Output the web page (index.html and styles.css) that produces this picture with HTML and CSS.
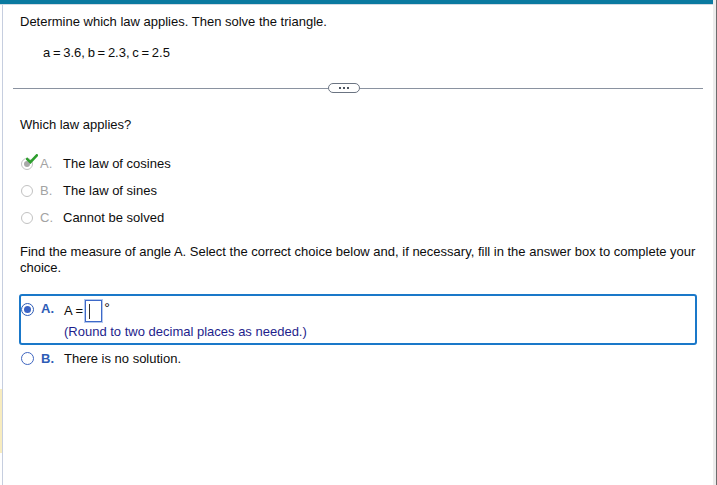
FILE: index.html
```html
<!DOCTYPE html>
<html>
<head>
<meta charset="utf-8">
<link rel="stylesheet" href="styles.css">
</head>
<body>
<div class="app">
  <div class="main">
    <div class="topbar"></div>
    <div class="body">
      <div class="leftrail"><div class="note"></div></div>
      <div class="content">
        <div class="prompt">Determine which law applies. Then solve the triangle.</div>
        <div class="given">a = 3.6, b = 2.3, c = 2.5</div>
        <div class="divider">
          <div class="line line-left"></div>
          <div class="pill"><span class="dot"></span><span class="dot"></span><span class="dot"></span></div>
          <div class="line line-right"></div>
        </div>
        <div class="question">Which law applies?</div>
        <div class="choices">
          <div class="choice">
            <span class="radio radio-done">
              <span class="radio-dot"></span>
              <svg class="check" viewBox="0 0 12 10" width="12" height="10"><path d="M1.2 5.2 L4.4 8.2 L10.8 1.4" fill="none" stroke="#2d9e2d" stroke-width="2.6" stroke-linecap="square"/></svg>
            </span>
            <span class="letter letter-muted">A.</span>
            <span class="label">The law of cosines</span>
          </div>
          <div class="choice">
            <span class="radio"></span>
            <span class="letter letter-muted">B.</span>
            <span class="label">The law of sines</span>
          </div>
          <div class="choice">
            <span class="radio"></span>
            <span class="letter letter-muted">C.</span>
            <span class="label">Cannot be solved</span>
          </div>
        </div>
        <div class="question2">Find the measure of angle A. Select the correct choice below and, if necessary, fill in the answer box to complete your choice.</div>
        <div class="answerbox">
          <span class="radio radio-on"><span class="radio-fill"></span></span>
          <span class="letter letter-active letter-boxed">A.</span>
          <div class="answer">
            <div class="eq">A =<span class="input"><span class="caret"></span></span><span class="deg">°</span></div>
            <div class="hint">(Round to two decimal places as needed.)</div>
          </div>
        </div>
        <div class="choice choice-b">
          <span class="radio radio-blue"></span>
          <span class="letter letter-active">B.</span>
          <span class="label">There is no solution.</span>
        </div>
      </div>
    </div>
  </div>
  <div class="rightrail"></div>
</div>
</body>
</html>
```
FILE: styles.css
```css
html, body {
  margin: 0;
  padding: 0;
  background: #ffffff;
}
body {
  font-family: "Liberation Sans", Arial, sans-serif;
  font-size: 13px;
  line-height: 16px;
  color: #0d0d0d;
}
.app {
  display: flex;
  width: 717px;
  height: 485px;
  overflow: hidden;
}
.main {
  width: 713px;
  display: flex;
  flex-direction: column;
}
.topbar {
  height: 4px;
  background: #0a7aa0;
  border-bottom: 1px solid #d2dae3;
}
.rightrail {
  width: 3px;
  background: #ececec;
  border-right: 1px solid #6d6d6d;
}
.body {
  display: flex;
  flex: 1;
}
.leftrail {
  width: 2px;
  border-right: 1px solid #c6cedf;
}
.note {
  margin-top: 384px;
  height: 64px;
  background: #f8ecbf;
}
.content {
  flex: 1;
  padding: 9px 10px 0 10px;
}
.prompt {
  padding-left: 7px;
}
.given {
  margin-top: 15px;
  padding-left: 30px;
  word-spacing: -0.9px;
}
.divider {
  margin-top: 22px;
  height: 10px;
  display: flex;
  align-items: center;
}
.line {
  height: 1px;
  background: #8a92a0;
}
.line-left {
  width: 315px;
}
.line-right {
  flex: 1;
}
.pill {
  width: 30px;
  height: 8px;
  border: 1px solid #6b7482;
  border-radius: 5px;
  display: flex;
  justify-content: center;
  align-items: center;
  gap: 2px;
  background: #fff;
}
.dot {
  width: 2px;
  height: 2px;
  background: #4d5560;
}
.question {
  margin-top: 24px;
  padding-left: 7px;
}
.choices {
  margin-top: 17px;
}
.choice {
  height: 27px;
  display: flex;
  align-items: center;
  padding-left: 8px;
}
.radio {
  position: relative;
  width: 12px;
  height: 12px;
  box-sizing: border-box;
  border: 1px solid #c2c2c2;
  border-radius: 50%;
  display: flex;
  align-items: center;
  justify-content: center;
  flex: none;
}
.radio-dot {
  width: 6px;
  height: 6px;
  border-radius: 50%;
  background: #a9a9a9;
}
.check {
  position: absolute;
  left: 4px;
  top: -5px;
}
.letter {
  width: 23px;
  margin-left: 7px;
  flex: none;
}
.letter-muted {
  color: #a3a3a3;
}
.letter-active {
  color: #2e5cb6;
  font-weight: bold;
}
.question2 {
  margin-top: 13px;
  padding-left: 7px;
}
.answerbox {
  margin: 18px 6px 0 6px;
  border: 2px solid #1a78c9;
  border-radius: 3px;
  padding: 2px 0 3px 0;
  display: flex;
  align-items: flex-start;
}
.radio-on {
  width: 13px;
  height: 13px;
  margin-top: 5px;
  border: 1px solid #2e5cb6;
}
.radio-fill {
  width: 7px;
  height: 7px;
  border-radius: 50%;
  background: #3b63c4;
}
.letter-boxed {
  margin-top: 3px;
}
.answer {
  display: flex;
  flex-direction: column;
}
.eq {
  margin-top: 2px;
  height: 22px;
  display: flex;
  align-items: center;
}
.input {
  margin-left: 2px;
  width: 12px;
  height: 20px;
  border: 1px solid #3d68c8;
  box-shadow: 0 0 0 1px #b3c8ee;
  display: flex;
  align-items: center;
  padding-left: 3px;
  box-sizing: content-box;
}
.caret {
  width: 1px;
  height: 15px;
  background: #333;
}
.deg {
  align-self: flex-start;
  margin-left: 2px;
  margin-top: 0;
  font-size: 14px;
}
.hint {
  margin-top: 2px;
  color: #1e1e8c;
}
.choice-b {
  height: 27px;
}
.radio-blue {
  width: 13px;
  height: 13px;
  border: 1px solid #3f66c0;
}
```
